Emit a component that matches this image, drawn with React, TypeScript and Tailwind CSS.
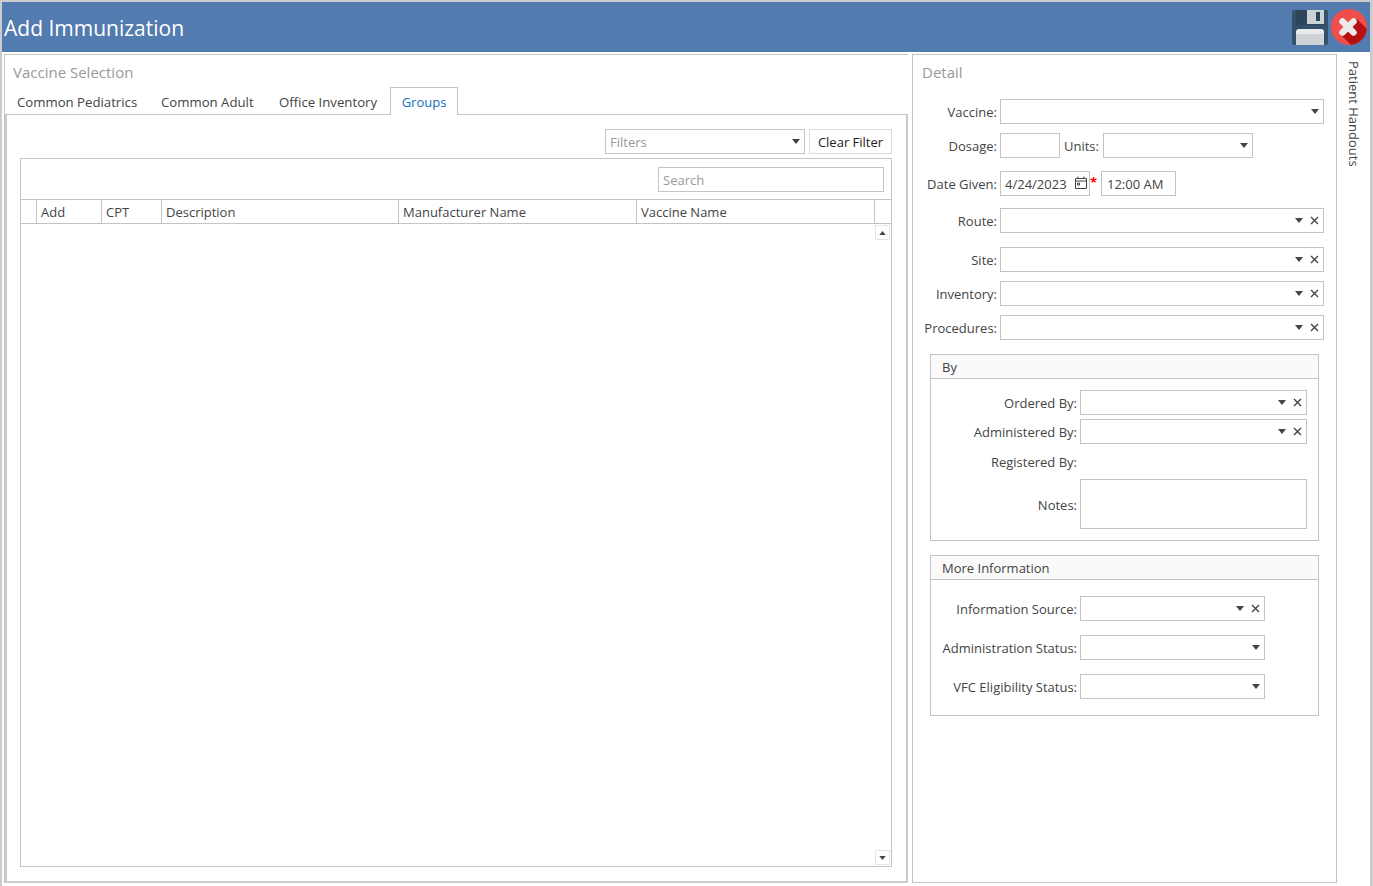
import { ReactNode } from "react";

const FONT = "font-['Open_Sans','Noto_Sans',sans-serif]";

const Caret = ({ className = "" }: { className?: string }) => (
  <svg width="8" height="5" viewBox="0 0 8 5" className={className}>
    <path d="M0 0h8L4 5z" fill="#444" />
  </svg>
);

const Clear = () => (
  <svg width="9" height="9" viewBox="0 0 9 9">
    <path d="M1 1l7 7M8 1L1 8" stroke="#444" strokeWidth="1.4" fill="none" />
  </svg>
);

const Combo = ({ width, clear, placeholder }: { width: string; clear?: boolean; placeholder?: string }) => (
  <div className={`${width} h-[25px] border border-[#c4c4c4] bg-white flex items-center justify-end shrink-0`}>
    {placeholder && <span className="mr-auto pl-1 pt-[2px] text-[#999]">{placeholder}</span>}
    <Caret className={clear ? "mr-[7px]" : "mr-[4px]"} />
    {clear && (
      <span className="mr-[4px]">
        <Clear />
      </span>
    )}
  </div>
);

const Row = ({ label, margin, labelWidth, children }: { label: string; margin: string; labelWidth: string; children: ReactNode }) => (
  <div className={`flex items-center ${margin}`}>
    <div className={`${labelWidth} text-right pr-[3px] pt-[2px] shrink-0 whitespace-nowrap`}>{label}</div>
    {children}
  </div>
);

const GroupBox = ({ title, className, children }: { title: string; className: string; children: ReactNode }) => (
  <div className={`w-[389px] border border-[#c4c4c4] ${className}`}>
    <div className="h-[24px] bg-[#fafafa] border-b border-[#c4c4c4] pl-[11px] pt-[2px] flex items-center">{title}</div>
    {children}
  </div>
);

const SaveIcon = () => (
  <svg width="36" height="35" viewBox="0 0 36 35">
    <rect width="36" height="35" rx="2" fill="#34506a" />
    <rect x="4" y="0" width="28" height="15" fill="#2d4659" />
    <rect x="15" y="0" width="17" height="14" fill="#cdd2d5" />
    <rect x="24" y="2" width="4" height="9" fill="#2d4659" />
    <path d="M4 35V22q0-3 3-3h22q3 0 3 3v13z" fill="#e8eaeb" />
    <rect x="4" y="24" width="28" height="11" fill="#cfd3d6" />
  </svg>
);

const CloseIcon = () => (
  <svg width="36" height="36" viewBox="0 0 36 36">
    <defs>
      <clipPath id="close-circle">
        <circle cx="18" cy="18" r="18" />
      </clipPath>
    </defs>
    <circle cx="18" cy="18" r="18" fill="#ef4e4a" />
    <path d="M26 10L42 26V42H26L10 26z" fill="#b71010" clipPath="url(#close-circle)" />
    <path d="M11.5 12.5l11 11M22.5 12.5l-11 11" stroke="#eceaea" strokeWidth="6.5" strokeLinecap="round" fill="none" />
  </svg>
);

const ScrollBtn = ({ up, className }: { up?: boolean; className: string }) => (
  <div className={`absolute right-[1px] w-[15px] h-[15px] border border-[#e4e4e4] flex items-center justify-center ${className}`}>
    <Caret className={`w-[7px] h-[4px] ${up ? "rotate-180" : ""}`} />
  </div>
);

const columns = [
  { title: "", width: "w-[16px]" },
  { title: "Add", width: "w-[65px]" },
  { title: "CPT", width: "w-[60px]" },
  { title: "Description", width: "w-[237px]" },
  { title: "Manufacturer Name", width: "w-[238px]" },
  { title: "Vaccine Name", width: "w-[238px]" },
];

export default function App() {
  return (
    <div className={`w-[1373px] h-[886px] overflow-hidden bg-white border-t-2 border-l-2 border-r-[3px] border-[#ccc] text-[#444] text-[13px] leading-none ${FONT}`}>
      <div className="w-[1368px] h-[50px] bg-[#527bb0] flex items-center justify-between pl-[2px]">
        <div className="text-white text-[21px] pt-[2px]">Add Immunization</div>
        <div className="flex items-center gap-[3px] pr-[3px]">
          <SaveIcon />
          <CloseIcon />
        </div>
      </div>

      <div className="flex mt-[2px] ml-[2px] h-[829px] items-start">
        {/* Vaccine selection */}
        <div className="w-[904px] h-[829px] border-t border-l border-[#c4c4c4] flex flex-col">
          <div className="h-[32px] pl-[8px] pt-[10px] text-[15px] text-[#999]">Vaccine Selection</div>
          <div className="h-[28px] flex relative">
            <div className="flex-1 flex items-center pl-[12px] pt-[5px] text-[13.2px] border-b border-[#c4c4c4] whitespace-nowrap">
              <span className="w-[144px]">Common Pediatrics</span>
              <span className="w-[118px]">Common Adult</span>
              <span>Office Inventory</span>
            </div>
            <div className="w-[68px] pt-[2px] border border-b-0 border-[#c4c4c4] text-[#106ebe] flex items-center justify-center">Groups</div>
            <div className="w-[450px] border-b border-[#c4c4c4]" />
          </div>
          <div className="flex-1 border-l-2 border-r-2 border-b-2 border-[#ccc] flex flex-col pl-[13px] pr-[14px]">
            <div className="flex justify-end gap-[4px] mt-[14px]">
              <Combo width="w-[200px]" placeholder="Filters" />
              <div className="w-[83px] h-[25px] pt-[2px] border border-[#ddd] flex items-center justify-center text-[#222]">Clear Filter</div>
            </div>
            <div className="relative mt-[4px] h-[709px] border border-[#c4c4c4]">
              <div className="flex justify-end pr-[7px] pt-[8px] h-[40px]">
                <div className="w-[226px] h-[25px] border border-[#c4c4c4] pl-1 pt-[2px] flex items-center text-[#999]">Search</div>
              </div>
              <div className="flex h-[25px] border-t border-b border-[#c4c4c4]">
                {columns.map((c) => (
                  <div key={c.title} className={`${c.width} border-r border-[#c4c4c4] pl-[4px] pt-[2px] flex items-center`}>
                    {c.title}
                  </div>
                ))}
              </div>
              <ScrollBtn up className="top-[66px]" />
              <ScrollBtn className="bottom-[1px]" />
            </div>
          </div>
        </div>

        {/* Detail */}
        <div className="ml-[4px] w-[425px] h-[829px] border border-[#c4c4c4]">
          <div className="h-[32px] pl-[9px] pt-[10px] text-[15px] text-[#999]">Detail</div>
          <Row label="Vaccine:" margin="mt-[12px]" labelWidth="w-[87px]">
            <Combo width="w-[324px]" />
          </Row>
          <Row label="Dosage:" margin="mt-[9px]" labelWidth="w-[87px]">
            <div className="w-[60px] h-[25px] border border-[#c4c4c4]" />
            <span className="w-[43px] pl-[4px] pt-[2px]">Units:</span>
            <Combo width="w-[150px]" />
          </Row>
          <Row label="Date Given:" margin="mt-[13px]" labelWidth="w-[87px]">
            <div className="w-[90px] h-[25px] border border-[#c4c4c4] flex items-center pl-[4px] pt-[2px] relative whitespace-nowrap">
              4/24/2023
              <svg width="12" height="13" viewBox="0 0 12 13" className="absolute right-[2px] top-[4px]">
                <path d="M.5 2.5h11v10H.5zM.5 5h11M3 .5v2M9 .5v2M2.5 7h2v2h-2z" stroke="#444" fill="none" />
              </svg>
            </div>
            <span className="w-[11px] text-[#f00] font-bold self-start pt-[5px]">*</span>
            <div className="w-[75px] h-[25px] border border-[#c4c4c4] flex items-center pl-[5px] pt-[2px]">12:00 AM</div>
          </Row>
          <Row label="Route:" margin="mt-[12px]" labelWidth="w-[87px]">
            <Combo width="w-[324px]" clear />
          </Row>
          <Row label="Site:" margin="mt-[14px]" labelWidth="w-[87px]">
            <Combo width="w-[324px]" clear />
          </Row>
          <Row label="Inventory:" margin="mt-[9px]" labelWidth="w-[87px]">
            <Combo width="w-[324px]" clear />
          </Row>
          <Row label="Procedures:" margin="mt-[9px]" labelWidth="w-[87px]">
            <Combo width="w-[324px]" clear />
          </Row>

          <GroupBox title="By" className="ml-[17px] mt-[14px] h-[187px]">
            <Row label="Ordered By:" margin="mt-[11px]" labelWidth="w-[149px]">
              <Combo width="w-[227px]" clear />
            </Row>
            <Row label="Administered By:" margin="mt-[4px]" labelWidth="w-[149px]">
              <Combo width="w-[227px]" clear />
            </Row>
            <Row label="Registered By:" margin="mt-[10px] h-[15px]" labelWidth="w-[149px]">
              <span />
            </Row>
            <Row label="Notes:" margin="mt-[10px]" labelWidth="w-[149px]">
              <div className="w-[227px] h-[50px] border border-[#c4c4c4]" />
            </Row>
          </GroupBox>

          <GroupBox title="More Information" className="ml-[17px] mt-[14px] h-[161px]">
            <Row label="Information Source:" margin="mt-[16px]" labelWidth="w-[149px]">
              <Combo width="w-[185px]" clear />
            </Row>
            <Row label="Administration Status:" margin="mt-[14px]" labelWidth="w-[149px]">
              <Combo width="w-[185px]" />
            </Row>
            <Row label="VFC Eligibility Status:" margin="mt-[14px]" labelWidth="w-[149px]">
              <Combo width="w-[185px]" />
            </Row>
          </GroupBox>
        </div>

        {/* Side tab */}
        <div className="ml-[10px] pt-[7px] [writing-mode:vertical-rl] whitespace-nowrap">Patient Handouts</div>
      </div>
    </div>
  );
}
